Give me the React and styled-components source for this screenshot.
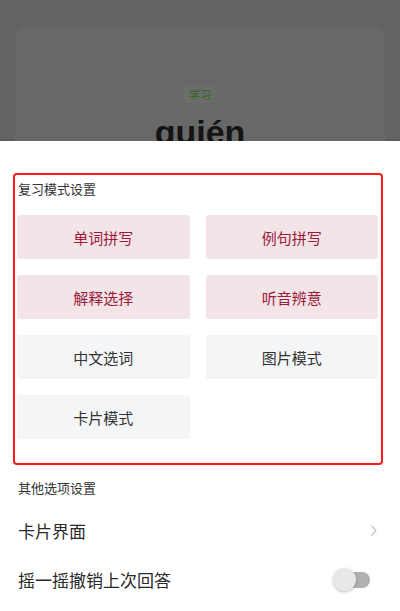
import styled, { createGlobalStyle } from 'styled-components';

const GlobalStyle = createGlobalStyle`
    html, body {
        margin: 0;
        padding: 0;
        background: #ffffff;
    }
    body {
        font-family: "Noto Sans CJK SC", "Noto Sans", sans-serif;
        color: #333333;
    }
    * {
        box-sizing: border-box;
    }
`;

const modes = [
    { label: '单词拼写', active: true },
    { label: '例句拼写', active: true },
    { label: '解释选择', active: true },
    { label: '听音辨意', active: true },
    { label: '中文选词', active: false },
    { label: '图片模式', active: false },
    { label: '卡片模式', active: false },
];

function Toggle() {
    return (
        <Switch>
            <Knob />
        </Switch>
    );
}

export default function App() {
    return (
        <Screen>
            <GlobalStyle />
            <Backdrop>
                <Card>
                    <Tag>学习</Tag>
                    <Word>quién</Word>
                </Card>
            </Backdrop>
            <Sheet>
                <Panel>
                    <SectionTitle>复习模式设置</SectionTitle>
                    <ModeGrid>
                        {modes.map((m) => (
                            <ModeButton key={m.label} $active={m.active}>
                                {m.label}
                            </ModeButton>
                        ))}
                    </ModeGrid>
                </Panel>
                <SectionTitle $outer>其他选项设置</SectionTitle>
                <Row>
                    <RowLabel>卡片界面</RowLabel>
                    <svg width="8" height="13" viewBox="0 0 8 13">
                        <polyline
                            points="1.5,1.5 6,6.5 1.5,11.5"
                            fill="none"
                            stroke="#c4c4c4"
                            strokeWidth="1.2"
                        />
                    </svg>
                </Row>
                <Row>
                    <RowLabel>摇一摇撤销上次回答</RowLabel>
                    <Toggle />
                </Row>
            </Sheet>
        </Screen>
    );
}

const Screen = styled.div`
    width: 400px;
    height: 611px;
    overflow: hidden;
    display: flex;
    flex-direction: column;
`;

const Backdrop = styled.div`
    height: 141px;
    flex-shrink: 0;
    background: #646464;
    padding: 27px 15px 0 15px;
    overflow: hidden;
`;

const Card = styled.div`
    position: relative;
    height: 200px;
    background: #686868;
    border-radius: 12px;
    padding-top: 58px;
    display: flex;
    flex-direction: column;
    align-items: center;

    &::before {
        content: '';
        position: absolute;
        top: -11px;
        left: 48px;
        right: 42px;
        height: 30px;
        border-radius: 12px 12px 0 0;
        background: #666666;
        z-index: -1;
    }
`;

const Tag = styled.div`
    height: 18px;
    padding: 0 5px;
    background: #6c6c6c;
    color: #2c6a1a;
    font-size: 11px;
    line-height: 18px;
    border-radius: 2px;
`;

const Word = styled.div`
    margin-top: 9px;
    font-family: "Liberation Sans", Arial, sans-serif;
    font-weight: 700;
    font-size: 34px;
    line-height: 40px;
    color: #141414;
`;

const Sheet = styled.div`
    flex: 1;
    background: #ffffff;
    padding: 32px 17px 0 13px;
    box-shadow: 0 -1px 2px rgba(0, 0, 0, 0.15);
`;

const Panel = styled.div`
    border: 2px solid #ff1a1a;
    border-radius: 4px;
    padding: 5px 3px 24px 2px;
`;

const SectionTitle = styled.div`
    font-size: 13px;
    line-height: 18px;
    color: #333333;
    padding-left: ${(p) => (p.$outer ? '5px' : '1px')};
    margin-top: ${(p) => (p.$outer ? '14px' : '0')};
    margin-bottom: ${(p) => (p.$outer ? '9px' : '17px')};
`;

const ModeGrid = styled.div`
    display: grid;
    grid-template-columns: 1fr 1fr;
    grid-auto-rows: 44px;
    gap: 16px;
`;

const ModeButton = styled.div`
    display: flex;
    align-items: center;
    justify-content: center;
    border-radius: 3px;
    font-size: 15px;
    background: ${(p) => (p.$active ? '#f3e4e7' : '#f4f5f7')};
    color: ${(p) => (p.$active ? '#9c1b3a' : '#333333')};
`;

const Row = styled.div`
    height: 49px;
    display: flex;
    align-items: center;
    justify-content: space-between;
    padding: 0 5px 0 5px;
`;

const RowLabel = styled.div`
    font-size: 17px;
    color: #2a2a2a;
`;

const Switch = styled.div`
    position: relative;
    width: 37px;
    height: 23px;
    margin-right: 8px;

    &::before {
        content: '';
        position: absolute;
        left: 4px;
        right: 0;
        top: 4px;
        height: 16px;
        border-radius: 8px;
        background: #b0b0b0;
    }
`;

const Knob = styled.div`
    position: absolute;
    left: 0;
    top: 0;
    width: 23px;
    height: 23px;
    border-radius: 50%;
    background: #e8e8e8;
    box-shadow: 0 1px 3px rgba(0, 0, 0, 0.25);
`;
